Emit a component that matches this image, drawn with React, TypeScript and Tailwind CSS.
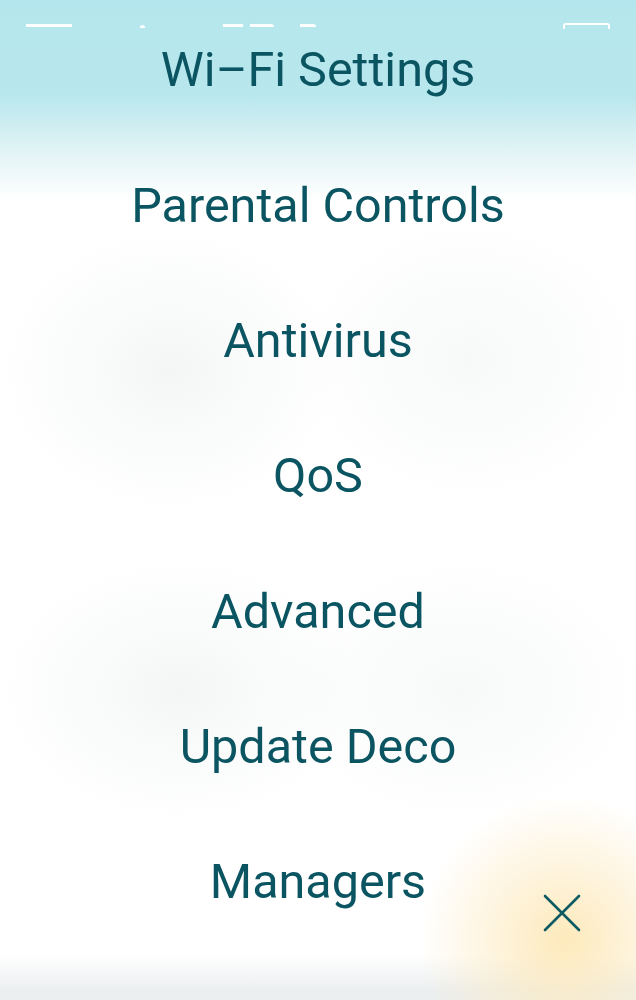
import React from "react";

const items = [
  "Wi–Fi Settings",
  "Parental Controls",
  "Antivirus",
  "QoS",
  "Advanced",
  "Update Deco",
  "Managers",
];

function CloseIcon() {
  return (
    <svg width="38" height="38" viewBox="0 0 38 38" fill="none">
      <path
        d="M2 2 L36 36 M36 2 L2 36"
        stroke="#0d5a62"
        strokeWidth="2.6"
        strokeLinecap="round"
      />
    </svg>
  );
}

export default function App() {
  return (
    <div
      className="relative w-[636px] h-[1000px] overflow-hidden bg-white bg-[radial-gradient(circle_at_565px_940px,#fde9bb_0px,rgba(253,233,187,0.5)_70px,rgba(255,255,255,0)_145px),radial-gradient(ellipse_170px_140px_at_170px_370px,rgba(228,233,233,0.4),rgba(255,255,255,0)),radial-gradient(ellipse_170px_140px_at_470px_360px,rgba(232,236,236,0.35),rgba(255,255,255,0)),radial-gradient(ellipse_180px_130px_at_180px_690px,rgba(228,233,233,0.4),rgba(255,255,255,0)),radial-gradient(ellipse_180px_130px_at_460px_690px,rgba(232,236,236,0.35),rgba(255,255,255,0)),linear-gradient(180deg,#b4e7ed_0px,#b8e7ed_95px,#e4f4f6_155px,#ffffff_200px,#ffffff_955px,#eceff0_990px)]"
      style={{ fontFamily: "Roboto, 'Noto Sans', sans-serif" }}
    >
      {/* app bar behind the overlay, only its top edge shows */}
      <div className="absolute inset-x-0 top-[23px] flex items-start px-[26px]">
        <div className="w-[46px] h-[3px] mt-[1px] bg-white" />
        <div className="flex items-start ml-[68px] mt-[2px]">
          <div className="w-[5px] h-[3px] rounded-t-full bg-white" />
          <div className="w-[20px] h-[3px] ml-[78px] -mt-[1px] bg-white" />
          <div className="w-[24px] h-[3px] ml-[7px] -mt-[1px] rounded-tr-full bg-white" />
          <div className="w-[16px] h-[3px] ml-[26px] -mt-[1px] rounded-tr-full bg-white" />
        </div>
        <div className="ml-auto w-[47px] h-[6px] rounded-t-[3px] border-t-2 border-x-2 border-white" />
      </div>

      {/* menu */}
      <nav className="relative flex flex-col pt-[3px]">
        {items.map((label) => (
          <a
            key={label}
            className="h-[135.3px] flex items-center justify-center text-[48.5px] leading-none text-[#0a5561]"
          >
            {label}
          </a>
        ))}
      </nav>

      <button className="absolute right-[55px] bottom-[68px]">
        <CloseIcon />
      </button>
    </div>
  );
}
